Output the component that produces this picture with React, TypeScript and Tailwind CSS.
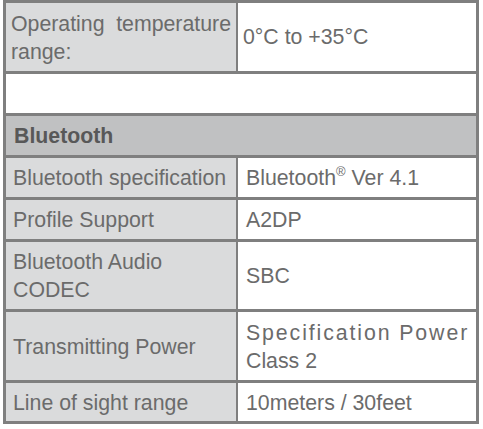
import React from "react"

const font = { fontFamily: '"Liberation Sans", Arial, sans-serif' }

type Row = {
  label: React.ReactNode
  value: React.ReactNode
  h: string
}

// heights include the 3px bottom border (border-box)
const rows: Row[] = [
  {
    label: "Bluetooth specification",
    value: (
      <>
        Bluetooth<sup className="text-[13px] relative -top-[9px]">®</sup> Ver 4.1
      </>
    ),
    h: "h-[42px]",
  },
  { label: "Profile Support", value: "A2DP", h: "h-[42px]" },
  { label: <>Bluetooth Audio<br />CODEC</>, value: "SBC", h: "h-[70px]" },
  {
    label: "Transmitting Power",
    value: (
      <>
        <span className="tracking-[1.9px]">Specification Power</span>
        <br />
        Class 2
      </>
    ),
    h: "h-[71px]",
  },
  { label: "Line of sight range", value: "10meters / 30feet", h: "h-[38px]" },
]

export default function App() {
  return (
    <div className="w-[483px] h-[429px] bg-white" style={font}>
      <div className="ml-[3px] w-[476px] border-[3px] border-[#7f7f7f] text-[21.3px] leading-[28px] text-[#6b6b6b]">
        {/* operating temperature */}
        <div className="flex h-[71px] border-b-[3px] border-[#7f7f7f]">
          <div className="w-[230px] shrink-0 bg-[#dadbdc] px-[5px] flex items-center">
            <p className="w-full text-justify pt-[1px]">Operating temperature range:</p>
          </div>
          <div className="w-[2px] bg-[#7f7f7f]" />
          <div className="flex-1 flex items-center px-[5px]">0°C to +35°C</div>
        </div>

        {/* empty */}
        <div className="h-[42px] border-b-[3px] border-[#7f7f7f]" />

        {/* section header */}
        <div className="h-[42px] bg-[#c0c1c2] border-b-[3px] border-[#7f7f7f] flex items-center px-[8px] font-bold text-[#585858]">
          Bluetooth
        </div>

        {rows.map((r, i) => (
          <div
            key={i}
            className={`flex ${r.h} ${i < rows.length - 1 ? "border-b-[3px] border-[#7f7f7f]" : ""}`}
          >
            <div className="w-[230px] shrink-0 bg-[#dadbdc] pl-[7px] pt-[1px] flex items-center">
              <div>{r.label}</div>
            </div>
            <div className="w-[2px] bg-[#7f7f7f]" />
            <div className="flex-1 flex items-center pl-[8px] pt-[1px]">
              <div>{r.value}</div>
            </div>
          </div>
        ))}
      </div>
    </div>
  )
}
